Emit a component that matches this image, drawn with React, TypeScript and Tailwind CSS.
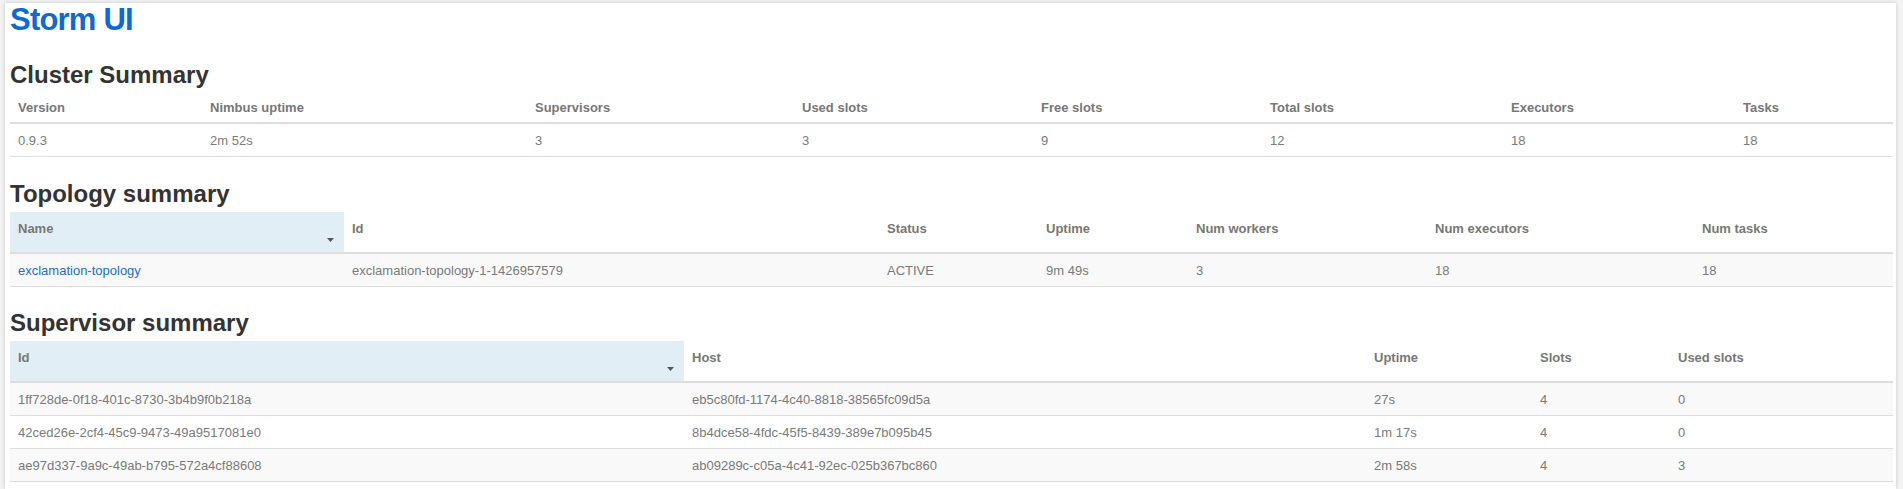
import React from "react";

type Col = { label: string; width: number };

const clusterCols: Col[] = [
  { label: "Version", width: 192 },
  { label: "Nimbus uptime", width: 325 },
  { label: "Supervisors", width: 267 },
  { label: "Used slots", width: 239 },
  { label: "Free slots", width: 229 },
  { label: "Total slots", width: 241 },
  { label: "Executors", width: 232 },
  { label: "Tasks", width: 158 },
];
const clusterRows = [["0.9.3", "2m 52s", "3", "3", "9", "12", "18", "18"]];

const topologyCols: Col[] = [
  { label: "Name", width: 334 },
  { label: "Id", width: 535 },
  { label: "Status", width: 159 },
  { label: "Uptime", width: 150 },
  { label: "Num workers", width: 239 },
  { label: "Num executors", width: 267 },
  { label: "Num tasks", width: 199 },
];
const topologyRows = [
  ["exclamation-topology", "exclamation-topology-1-1426957579", "ACTIVE", "9m 49s", "3", "18", "18"],
];

const supervisorCols: Col[] = [
  { label: "Id", width: 674 },
  { label: "Host", width: 682 },
  { label: "Uptime", width: 166 },
  { label: "Slots", width: 138 },
  { label: "Used slots", width: 223 },
];
const supervisorRows = [
  ["1ff728de-0f18-401c-8730-3b4b9f0b218a", "eb5c80fd-1174-4c40-8818-38565fc09d5a", "27s", "4", "0"],
  ["42ced26e-2cf4-45c9-9473-49a9517081e0", "8b4dce58-4fdc-45f5-8439-389e7b095b45", "1m 17s", "4", "0"],
  ["ae97d337-9a9c-49ab-b795-572a4cf88608", "ab09289c-c05a-4c41-92ec-025b367bc860", "2m 58s", "4", "3"],
];

function SortArrow() {
  return (
    <svg className="absolute right-[10px] bottom-[10px]" width="7" height="4" viewBox="0 0 7 4">
      <path d="M0 0 L7 0 L3.5 4 Z" fill="#555" />
    </svg>
  );
}

function DataTable({
  cols,
  rows,
  sortable,
  striped,
  linkFirst,
}: {
  cols: Col[];
  rows: string[][];
  sortable?: boolean;
  striped?: boolean;
  linkFirst?: boolean;
}) {
  return (
    <table className="table-fixed border-collapse w-[1883px] text-[13px] leading-[18px]">
      <colgroup>
        {cols.map((c) => (
          <col key={c.label} style={{ width: c.width }} />
        ))}
      </colgroup>
      <thead>
        <tr className="border-b-2 border-[#dddddd]">
          {cols.map((c, i) => (
            <th
              key={c.label}
              className={
                sortable
                  ? `relative text-left align-top font-bold text-[#777] px-2 pt-[8px] h-[41px] ${i === 0 ? "bg-[#e2eef6]" : ""}`
                  : "text-left align-top font-bold text-[#777] px-2 pt-[8px] pb-[5px]"
              }
            >
              {c.label}
              {sortable && i === 0 && <SortArrow />}
            </th>
          ))}
        </tr>
      </thead>
      <tbody>
        {rows.map((r, ri) => (
          <tr
            key={ri}
            className={`border-b border-[#dddddd] ${striped && ri % 2 === 0 ? "bg-[#f9f9f9]" : "bg-white"}`}
          >
            {r.map((v, ci) => (
              <td key={ci} className="px-2 pt-[8px] pb-[6px] text-[#7a7a7a] whitespace-nowrap">
                {linkFirst && ci === 0 ? <a className="text-[#1a6fcc]">{v}</a> : v}
              </td>
            ))}
          </tr>
        ))}
      </tbody>
    </table>
  );
}

export default function App() {
  return (
    <div
      className="min-h-[489px] bg-[#f3f3f3] pl-[5px] pt-[3px]"
      style={{ fontFamily: '"Liberation Sans", Arial, sans-serif' }}
    >
      <div className="w-[1891px] min-h-[486px] bg-white shadow-[0_0_4px_rgba(0,0,0,0.18)] pl-[5px]">
        <h1 className="text-[31px] leading-[33px] font-bold tracking-[-0.8px] text-[#0d6ad2]">Storm UI</h1>

        <h2 className="mt-[25px] mb-[2px] text-[24px] leading-[28px] font-bold text-[#333]">Cluster Summary</h2>
        <DataTable cols={clusterCols} rows={clusterRows} />

        <h2 className="mt-[23px] mb-[4px] text-[24px] leading-[28px] font-bold text-[#333]">Topology summary</h2>
        <DataTable cols={topologyCols} rows={topologyRows} sortable striped linkFirst />

        <h2 className="mt-[22px] mb-[4px] text-[24px] leading-[28px] font-bold text-[#333]">Supervisor summary</h2>
        <DataTable cols={supervisorCols} rows={supervisorRows} sortable striped />
      </div>
    </div>
  );
}
